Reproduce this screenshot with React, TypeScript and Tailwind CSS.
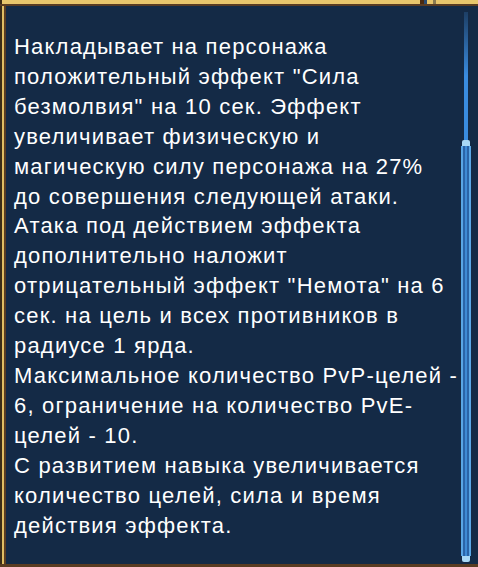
import React from "react";

const lines = [
  "Накладывает на персонажа",
  "положительный эффект \"Сила",
  "безмолвия\" на 10 сек. Эффект",
  "увеличивает физическую и",
  "магическую силу персонажа на 27%",
  "до совершения следующей атаки.",
  "Атака под действием эффекта",
  "дополнительно наложит",
  "отрицательный эффект \"Немота\" на 6",
  "сек. на цель и всех противников в",
  "радиусе 1 ярда.",
  "Максимальное количество PvP-целей -",
  "6, ограничение на количество PvE-",
  "целей - 10.",
  "С развитием навыка увеличивается",
  "количество целей, сила и время",
  "действия эффекта.",
];

const Scrollbar = () => (
  <div className="flex h-full w-[11px] flex-col items-center pb-[2px] pt-[6px]">
    <div className="h-[128px] w-[4px] bg-gradient-to-b from-[#1d3f66] via-[#3a8ce0] to-[#3a8ce0]" />
    <div className="flex w-[10px] flex-1 flex-col items-center">
      <div className="h-[6px] w-[8px] rounded-t-[2px] bg-[#a9d9f6]" />
      <div className="flex w-full flex-1 border-x-[2px] border-[#5aa6e6] bg-[#2a64a8]">
        <div className="mx-auto w-[2px] bg-[#3f8bd6]" />
      </div>
      <div className="h-[6px] w-[8px] rounded-b-[2px] bg-[#a9d9f6]" />
    </div>
  </div>
);

export default function App() {
  return (
    <div className="flex h-[567px] w-[478px] flex-col overflow-hidden bg-[#142a46]">
      <div className="flex h-[4px] w-full bg-[#e8c66c]">
        <div className="w-[2px] bg-[#3a2a14]" />
        <div className="ml-[418px] w-[4px] bg-[#4a2a10]" />
        <div className="w-[3px] bg-[#2a4a70]" />
        <div className="ml-[6px] w-[3px] bg-[#8a7a50]" />
      </div>
      <div className="h-[2px] w-full bg-[#5a3c22]" />
      <div className="flex flex-1">
        <div className="flex w-[6px]">
          <div className="w-[2px] bg-[#3a2c18]" />
          <div className="w-[2px] bg-[#e0be64]" />
          <div className="w-[2px] bg-[#5a3c22]" />
        </div>
        <div
          className="min-w-0 flex-1 pl-[8px] pt-[26px] text-[22px] leading-[29.9px] tracking-[1.2px] text-white"
          style={{ fontFamily: '"Liberation Sans", Arial, sans-serif' }}
        >
          {lines.map((line, i) => (
            <div key={i} className="whitespace-nowrap">
              {line}
            </div>
          ))}
        </div>
        <div className="mr-[7px] flex">
          <Scrollbar />
        </div>
      </div>
      <div className="h-[3px] w-full bg-[#5a3c22]" />
    </div>
  );
}
